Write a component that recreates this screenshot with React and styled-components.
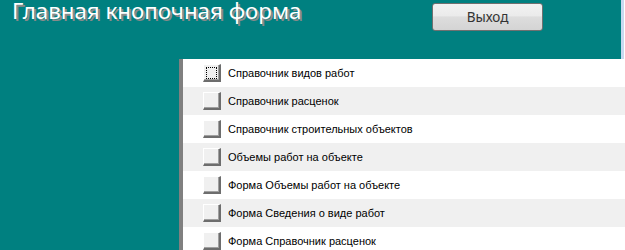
import React from "react";
import styled, { createGlobalStyle } from "styled-components";

const GlobalStyle = createGlobalStyle`
  html, body {
    margin: 0;
    padding: 0;
    background: #ffffff;
    overflow: hidden;
  }
`;

const Page = styled.div`
  width: 625px;
  height: 250px;
  display: flex;
  flex-direction: column;
  background: #ffffff;
`;

const Header = styled.div`
  display: flex;
  height: 59px;
  flex-shrink: 0;
`;

const HeaderBody = styled.div`
  width: 621px;
  background: #008080;
  display: flex;
  align-items: flex-start;
`;

const Edge = styled.div`
  width: 3px;
  background: #c9d9f1;
`;

const Title = styled.div`
  font-family: "Noto Sans", sans-serif;
  font-size: 22.3px;
  color: #ffffff;
  text-shadow: 2px 2px 0 #8a8a8a;
  padding: 0 0 0 12px;
  line-height: 22px;
  height: 28px;
  width: 420px;
  white-space: nowrap;
`;

const ExitButton = styled.button`
  margin-top: 3px;
  width: 111px;
  height: 28px;
  border: 1px solid #707070;
  border-radius: 3px;
  background: linear-gradient(#f2f2f2 0%, #ebebeb 45%, #dddddd 50%, #d4d4d4 100%);
  font-family: "Noto Sans", sans-serif;
  font-size: 13.5px;
  color: #333333;
  padding: 0;
`;

const Main = styled.div`
  flex: 1;
  display: flex;
  background: #008080;
`;

const Spacer = styled.div`
  width: 179px;
`;

const Detail = styled.div`
  flex: 1;
  border-left: 4px solid #808080;
  display: flex;
  flex-direction: column;
`;

const Row = styled.div`
  height: 28px;
  display: flex;
  align-items: center;
  background: ${(p) => (p.$alt ? "#f0f0f0" : "#ffffff")};
  padding-left: 20px;
`;

const Square = styled.div`
  box-sizing: border-box;
  width: 18px;
  height: 18px;
  background: #f0f0f0;
  border-top: 1px solid #ffffff;
  border-left: 1px solid #ffffff;
  border-right: 2px solid #6d6d6d;
  border-bottom: 2px solid #6d6d6d;
  box-shadow: inset -1px -1px 0 #a0a0a0;
  position: relative;
  margin-right: 7px;
`;

const Focus = styled.div`
  position: absolute;
  inset: 2px 2px 1px 2px;
  border: 1px dotted #000000;
`;

const Label = styled.span`
  font-family: "Liberation Sans", sans-serif;
  font-size: 11px;
  color: #000000;
`;

const items = [
  "Справочник видов работ",
  "Справочник расценок",
  "Справочник строительных объектов",
  "Объемы работ на объекте",
  "Форма Объемы работ на объекте",
  "Форма Сведения о виде работ",
  "Форма Справочник расценок",
];

export default function App() {
  return (
    <Page>
      <GlobalStyle />
      <Header>
        <HeaderBody>
          <Title>Главная кнопочная форма</Title>
          <ExitButton>Выход</ExitButton>
        </HeaderBody>
        <Edge />
      </Header>
      <Main>
        <Spacer />
        <Detail>
          {items.map((text, idx) => (
            <Row key={idx} $alt={idx % 2 === 1}>
              <Square>{idx === 0 && <Focus />}</Square>
              <Label>{text}</Label>
            </Row>
          ))}
        </Detail>
      </Main>
    </Page>
  );
}
